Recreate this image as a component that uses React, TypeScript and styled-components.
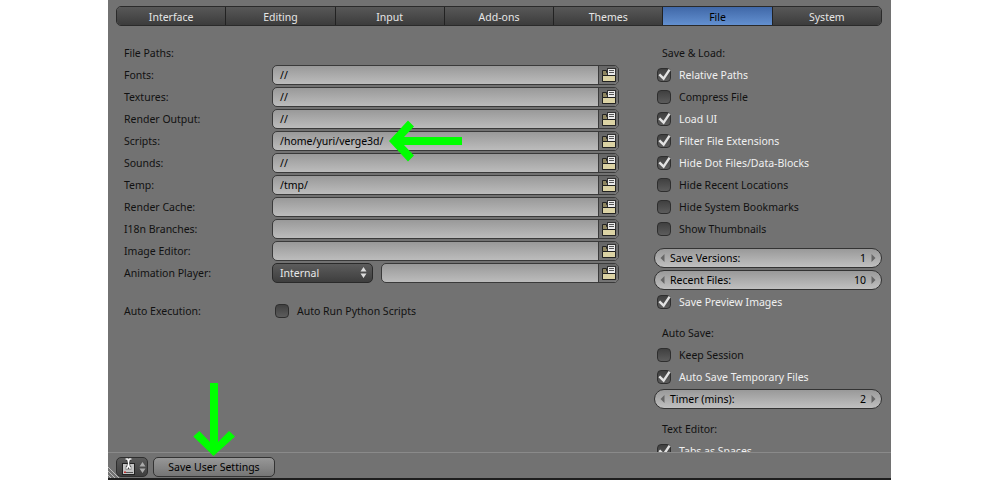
import React from "react";
import styled, { createGlobalStyle } from "styled-components";

const Global = createGlobalStyle`
  html, body { margin: 0; padding: 0; background: #fff; }
  body { font-family: "Noto Sans", "Open Sans", sans-serif; font-size: 10.5px; overflow: hidden; }
`;

const Page = styled.div`
  position: relative;
  width: 1000px;
  height: 480px;
  background: #fff;
  overflow: hidden;
`;
const Editor = styled.div`
  margin-left: 108px;
  width: 783px;
  height: 480px;
  background: #727272;
  display: flex;
  flex-direction: column;
`;
const Tabs = styled.div`
  flex: none;
  display: flex;
  height: 20px;
  margin: 6px 9px 0 8px;
  border: 1px solid #2a2a2a;
  border-radius: 5px;
  box-sizing: border-box;
  overflow: hidden;
`;
const Tab = styled.div<{ $active?: boolean }>`
  flex: 1;
  display: flex;
  align-items: center;
  justify-content: center;
  padding-top: 1px;
  color: ${p => (p.$active ? "#000" : "#e6e6e6")};
  background: ${p => (p.$active ? "linear-gradient(#4068a8,#6390d0)" : "linear-gradient(#585858,#3c3c3c)")};
  & + & { border-left: 1px solid #222; }
`;
const Content = styled.div`
  flex: 1;
  min-height: 0;
  overflow: hidden;
  display: flex;
  padding: 16px 9px 0 16px;
`;
const LeftCol = styled.div`
  width: 495px;
  flex: none;
  display: flex;
  flex-direction: column;
`;
const RightCol = styled.div`
  margin-left: 35px;
  flex: 1;
  display: flex;
  flex-direction: column;
`;
const Row = styled.div<{ $top?: number }>`
  flex: none;
  height: 22px;
  display: flex;
  align-items: center;
  margin-top: ${p => p.$top ?? 0}px;
  color: #000;
`;
const Label = styled.div`
  width: 148px;
  flex: none;
  color: #111;
`;
const Heading = styled.div`
  padding-left: 8px;
  color: #111;
`;
const PathField = styled.div`
  flex: 1;
  min-width: 0;
  height: 20px;
  margin-bottom: 1px;
  box-sizing: border-box;
  display: flex;
  align-items: stretch;
  border: 1px solid #3a3a3a;
  border-radius: 5px;
  overflow: hidden;
  background: linear-gradient(#999,#bcbcbc);
`;
const PathText = styled.div`
  flex: 1;
  padding-left: 7px;
  line-height: 19px;
  color: #000;
`;
const FolderBtn = styled.div`
  flex: none;
  width: 19px;
  border-left: 1px solid #3a3a3a;
  background: linear-gradient(#666,#757575);
  display: flex;
  align-items: center;
  justify-content: center;
`;
const Select = styled.div`
  flex: none;
  width: 101px;
  height: 20px;
  margin-bottom: 1px;
  box-sizing: border-box;
  margin-right: 8px;
  padding: 0 5px 0 7px;
  display: flex;
  align-items: center;
  justify-content: space-between;
  color: #e8e8e8;
  border: 1px solid #2a2a2a;
  border-radius: 5px;
  background: linear-gradient(#5c5c5c,#3e3e3e);
`;
const Box = styled.div`
  flex: none;
  width: 14px;
  height: 14px;
  box-sizing: border-box;
  border: 1px solid #2e2e2e;
  border-radius: 4px;
  background: linear-gradient(#404040,#5c5c5c);
  display: flex;
  align-items: center;
  justify-content: center;
`;
const CheckRow = styled(Row)`
  padding-left: 3px;
  gap: 8px;
`;
const CheckText = styled.span<{ $on?: boolean }>`
  color: ${p => (p.$on ? "#f0f0f0" : "#111")};
`;
const NumField = styled.div`
  width: 228px;
  height: 20px;
  margin-bottom: 1px;
  box-sizing: border-box;
  display: flex;
  align-items: center;
  padding: 0 5px;
  gap: 5px;
  color: #000;
  border: 1px solid #333;
  border-radius: 10px;
  background: linear-gradient(#999,#c0c0c0);
`;
const NumLabel = styled.span`
  flex: 1;
`;
const Footer = styled.div`
  flex: none;
  height: 26px;
  box-sizing: border-box;
  position: relative;
  border-top: 1px solid #8a8a8a;
  background: #727272;
  display: flex;
  align-items: center;
  padding: 3px 0 0 8px;
  gap: 5px;
`;
const FooterEdge = styled.div`
  flex: none;
  height: 2px;
  background: #1e1e1e;
`;
const EditorSwitch = styled.div`
  width: 32px;
  height: 20px;
  box-sizing: border-box;
  border: 1px solid #2e2e2e;
  border-radius: 5px;
  background: linear-gradient(#5a5a5a,#3e3e3e);
  display: flex;
  align-items: center;
  padding-left: 4px;
  gap: 3px;
`;
const SaveButton = styled.div`
  width: 122px;
  height: 20px;
  box-sizing: border-box;
  border: 1px solid #333;
  border-radius: 5px;
  padding-bottom: 1px;
  background: linear-gradient(#979797,#757575);
  display: flex;
  align-items: center;
  justify-content: center;
  color: #000;
`;
const Grip = styled.svg`
  position: absolute;
  left: 0;
  bottom: 0;
`;
const Arrow = styled.svg`
  position: absolute;
  left: 0;
  top: 0;
  pointer-events: none;
`;

const Folder = () => (
  <svg width="16" height="16" viewBox="0 0 16 16">
    <path d="M1.500 3.500h4v2h9v9h-13z" fill="#8f8660" stroke="#222" />
    <rect x="6.500" y="1.500" width="8" height="7" fill="#eaeaea" stroke="#333" />
    <path d="M8 3.500h5M8 5.500h5" stroke="#555" />
    <path d="M1.500 8.500h13v6h-13z" fill="#dcd3a4" stroke="#222" />
  </svg>
);
const Check = () => (
  <svg width="12" height="12" viewBox="0 0 12 12" overflow="visible">
    <path d="M1.300 5.300 5.600 9.600 11.600 .6" fill="none" stroke="#e2e2e2" strokeWidth="2.400" />
  </svg>
);
const UpDown = ({ c = "#ddd" }: { c?: string }) => (
  <svg width="7" height="13" viewBox="0 0 7 13">
    <path d="M3.500 1 6.500 5.500H.5zM3.500 12 .5 7.500h6z" fill={c} />
  </svg>
);
const Tri = ({ dir }: { dir: "l" | "r" }) => (
  <svg width="5" height="8" viewBox="0 0 5 8">
    <path d={dir === "l" ? "M4.500 0v8L.5 4z" : "M.5 0v8l4-4z"} fill="#666" />
  </svg>
);
const PrefsIcon = () => (
  <svg width="15" height="18" viewBox="0 0 15 18">
    <rect x="1.500" y="5.500" width="12" height="11" fill="#c4c4c4" stroke="#222" />
    <rect x="3" y="13.500" width="2" height="1.500" fill="#c03030" />
    <path d="M5 14.500h7" stroke="#555" />
    <path d="M4.500 1h2.200L8.500 10h2M10.500 1H8.300L6.500 10h-2" fill="none" stroke="#222" strokeWidth="2.600" />
    <path d="M4.500 1h2.200L8.500 10h2M10.500 1H8.300L6.500 10h-2" fill="none" stroke="#fff" strokeWidth="1.300" />
  </svg>
);

const tabs = ["Interface", "Editing", "Input", "Add-ons", "Themes", "File", "System"];
const paths: [string, string][] = [
  ["Fonts:", "//"],
  ["Textures:", "//"],
  ["Render Output:", "//"],
  ["Scripts:", "/home/yuri/verge3d/"],
  ["Sounds:", "//"],
  ["Temp:", "/tmp/"],
  ["Render Cache:", ""],
  ["I18n Branches:", ""],
  ["Image Editor:", ""],
];

const CheckItem = ({ on, text, top }: { on?: boolean; text: string; top?: number }) => (
  <CheckRow $top={top}>
    <Box>{on && <Check />}</Box>
    <CheckText $on={on}>{text}</CheckText>
  </CheckRow>
);
const Num = ({ label, value, top }: { label: string; value: string; top?: number }) => (
  <Row $top={top}>
    <NumField>
      <Tri dir="l" />
      <NumLabel>{label}</NumLabel>
      <span>{value}</span>
      <Tri dir="r" />
    </NumField>
  </Row>
);

export default function App() {
  return (
    <Page>
      <Global />
      <Editor>
        <Tabs>
          {tabs.map(t => (
            <Tab key={t} $active={t === "File"}>{t}</Tab>
          ))}
        </Tabs>
        <Content>
          <LeftCol>
            <Row><Label>File Paths:</Label></Row>
            {paths.map(([l, v]) => (
              <Row key={l}>
                <Label>{l}</Label>
                <PathField>
                  <PathText>{v}</PathText>
                  <FolderBtn><Folder /></FolderBtn>
                </PathField>
              </Row>
            ))}
            <Row>
              <Label>Animation Player:</Label>
              <Select>Internal<UpDown /></Select>
              <PathField>
                <PathText />
                <FolderBtn><Folder /></FolderBtn>
              </PathField>
            </Row>
            <Row $top={16}>
              <Label>Auto Execution:</Label>
              <CheckItem text="Auto Run Python Scripts" />
            </Row>
          </LeftCol>
          <RightCol>
            <Row><Heading>Save &amp; Load:</Heading></Row>
            <CheckItem on text="Relative Paths" />
            <CheckItem text="Compress File" />
            <CheckItem on text="Load UI" />
            <CheckItem on text="Filter File Extensions" />
            <CheckItem on text="Hide Dot Files/Data-Blocks" />
            <CheckItem text="Hide Recent Locations" />
            <CheckItem text="Hide System Bookmarks" />
            <CheckItem text="Show Thumbnails" />
            <Num top={7} label="Save Versions:" value="1" />
            <Num label="Recent Files:" value="10" />
            <CheckItem on text="Save Preview Images" />
            <Row $top={9}><Heading>Auto Save:</Heading></Row>
            <CheckItem text="Keep Session" />
            <CheckItem on text="Auto Save Temporary Files" />
            <Num label="Timer (mins):" value="2" />
            <Row $top={8}><Heading>Text Editor:</Heading></Row>
            <CheckItem on text="Tabs as Spaces" />
          </RightCol>
        </Content>
        <Footer>
          <Grip width="12" height="12" viewBox="0 0 12 12">
            <path d="M0 5 7 12M0 9 3 12M0 1 11 12" stroke="#bbb" strokeWidth="1" />
          </Grip>
          <EditorSwitch><PrefsIcon /><UpDown c="#aaa" /></EditorSwitch>
          <SaveButton>Save User Settings</SaveButton>
        </Footer>
        <FooterEdge />
      </Editor>
      <Arrow width="1000" height="480" viewBox="0 0 1000 480">
        <g fill="#00ff00">
          <polygon points="389,141 408,120.500 414,126.500 404,137 462,137 462,145 404,145 414,155.500 408,161.500" />
          <polygon points="213.500,456 193.300,436.500 199.300,431 210,442 210,383 218,383 218,442 229,431 235,436.500" />
        </g>
      </Arrow>
    </Page>
  );
}
